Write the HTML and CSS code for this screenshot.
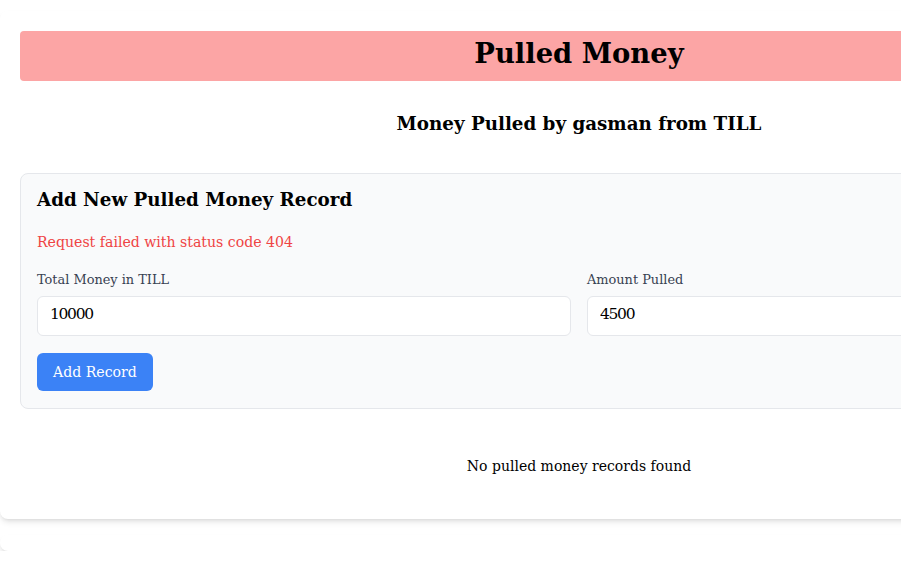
FILE: index.html
```html
<!DOCTYPE html>
<html>
<head>
<meta charset="utf-8">
<link rel="stylesheet" href="styles.css">
</head>
<body>
<div class="page">
  <div class="panel">
    <h1 class="banner">Pulled Money</h1>
    <h2 class="subtitle">Money Pulled by gasman from TILL</h2>
    <div class="form-card">
      <h3 class="form-title">Add New Pulled Money Record</h3>
      <p class="error">Request failed with status code 404</p>
      <div class="fields">
        <div class="field">
          <label class="label">Total Money in TILL</label>
          <input class="input" type="text" value="10000">
        </div>
        <div class="field">
          <label class="label">Amount Pulled</label>
          <input class="input" type="text" value="4500">
        </div>
      </div>
      <button class="btn">Add Record</button>
    </div>
    <p class="empty">No pulled money records found</p>
  </div>
  <div class="panel-2"></div>
</div>
</body>
</html>
```

FILE: styles.css
```css
html, body {
  margin: 0;
  padding: 0;
  background: #fff;
  font-family: "DejaVu Serif", serif;
  color: #000;
}
.page {
  width: 1158px;
  padding-top: 11px;
}
.panel {
  background: #fff;
  border-radius: 8px;
  box-shadow: 0 4px 6px -1px rgba(0,0,0,0.1), 0 2px 4px -2px rgba(0,0,0,0.1);
  padding: 20px;
}
.banner {
  margin: 0;
  height: 50px;
  background: #fca5a5;
  border-radius: 4px;
  font-size: 27.4px;
  line-height: 44px;
  text-align: center;
  font-weight: bold;
}
.subtitle {
  margin: 29px 0 35px;
  font-size: 18.3px;
  line-height: 28px;
  text-align: center;
  font-weight: bold;
}
.form-card {
  background: #f9fafb;
  border: 1px solid #e5e7eb;
  border-radius: 8px;
  padding: 12px 16px 17px;
}
.form-title {
  margin: 0 0 16px;
  font-size: 18.3px;
  line-height: 28px;
  font-weight: bold;
}
.error {
  margin: 0 0 16px;
  color: #ef4444;
  font-size: 14.1px;
  line-height: 24px;
}
.fields {
  display: grid;
  grid-template-columns: 1fr 1fr;
  gap: 16px;
  margin-bottom: 17px;
}
.field {
  display: flex;
  flex-direction: column;
}
.label {
  font-size: 12.9px;
  line-height: 20px;
  color: #374151;
  margin-bottom: 6px;
}
.input {
  height: 40px;
  box-sizing: border-box;
  border: 1px solid #e5e7eb;
  border-radius: 6px;
  padding: 6px 12px 10px;
  font-family: "DejaVu Serif", serif;
  font-size: 15.5px;
  letter-spacing: -1.3px;
  background: #fff;
  color: #000;
  outline: none;
}
.btn {
  display: block;
  height: 38px;
  padding: 0 16px;
  background: #3b82f6;
  color: #fff;
  border: 0;
  border-radius: 6px;
  font-family: "DejaVu Serif", serif;
  font-size: 14.1px;
}
.empty {
  margin: 45px 0 21px;
  text-align: center;
  font-size: 14px;
  line-height: 24px;
}
.panel-2 {
  margin-top: 16px;
  height: 16px;
  background: #fff;
  border-radius: 8px;
  box-shadow: 0 4px 6px -1px rgba(0,0,0,0.1), 0 2px 4px -2px rgba(0,0,0,0.1);
}
```
